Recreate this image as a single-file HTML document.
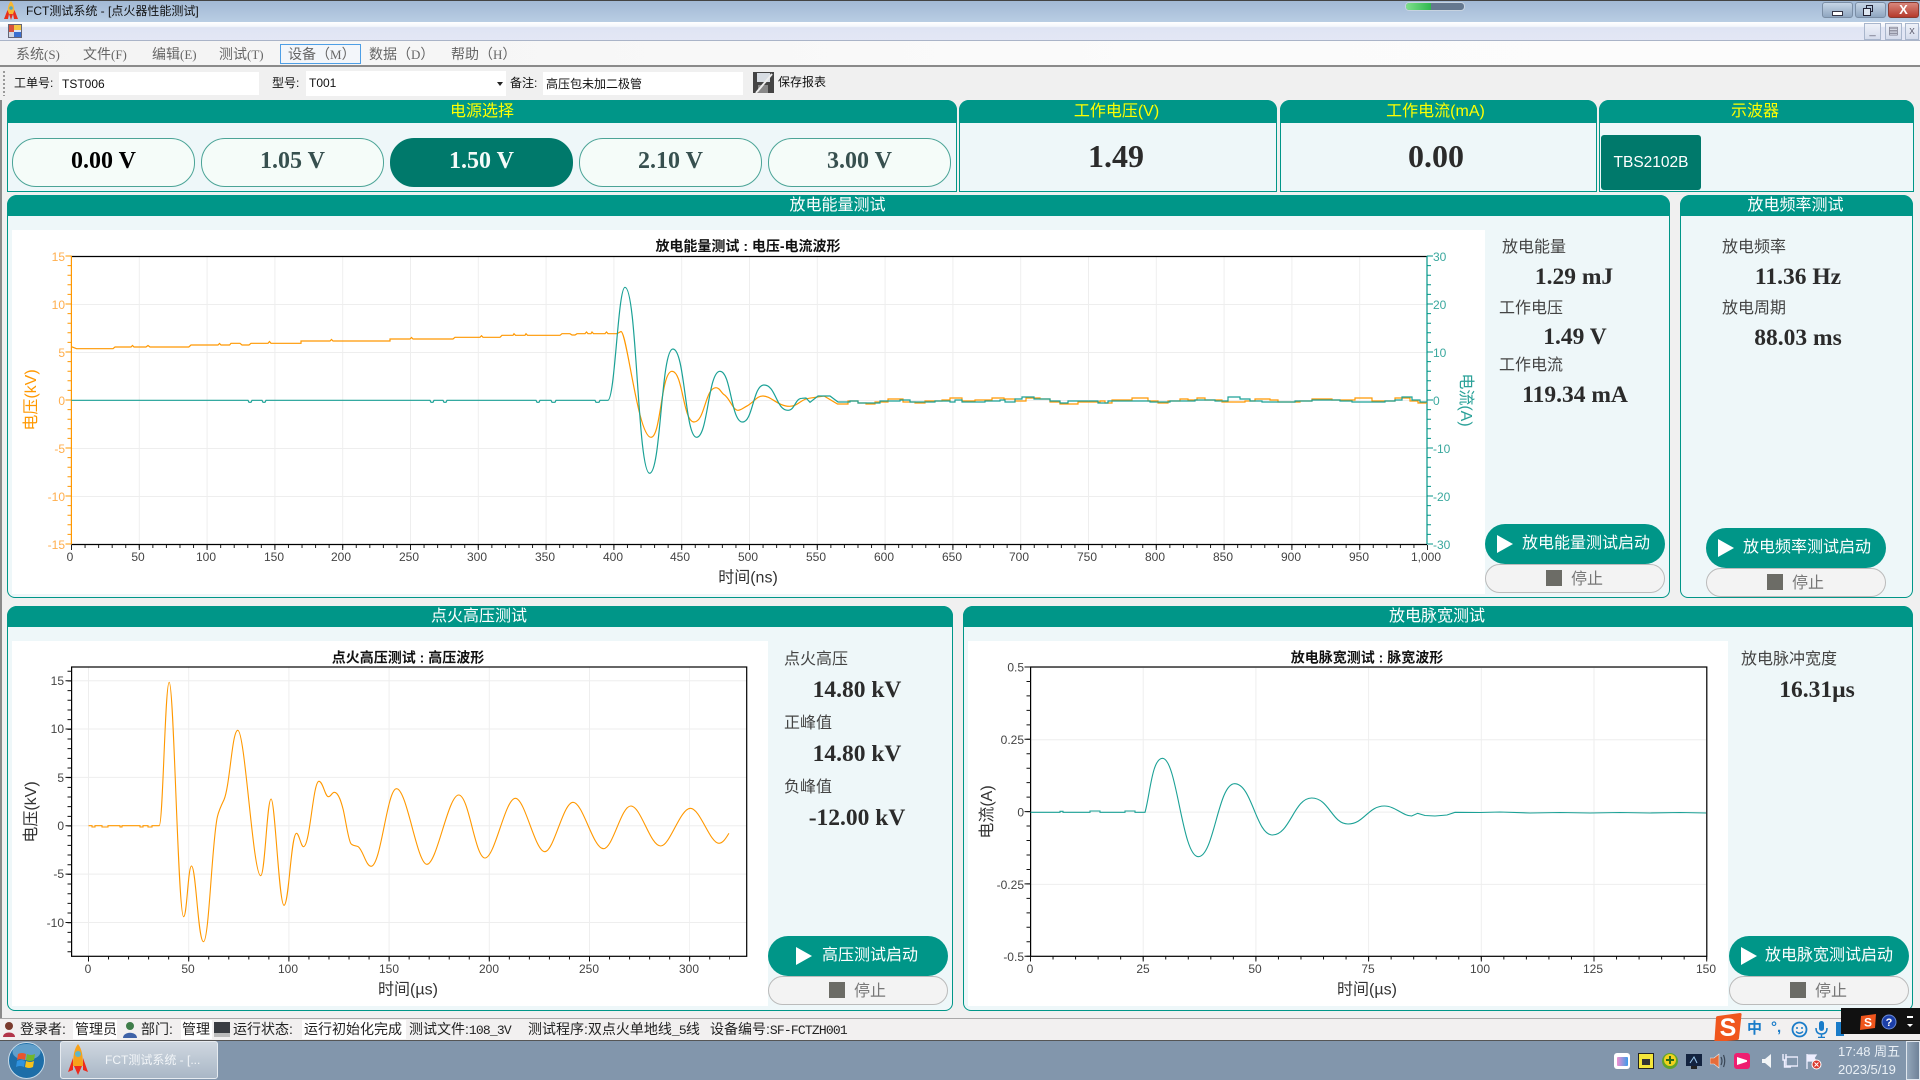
<!DOCTYPE html>
<html lang="zh"><head><meta charset="utf-8"><title>FCT测试系统</title>
<style>
html,body{margin:0;padding:0;width:1920px;height:1080px;overflow:hidden;background:#f0f0f0}
body{position:relative;font-family:"Liberation Sans","Noto Sans CJK SC",sans-serif;color:#222}
div,span,svg{position:absolute;box-sizing:border-box}
.t{white-space:nowrap;line-height:1}
.m{font-size:14px;color:#666;top:47px;white-space:nowrap;line-height:14px}
.m i{font-family:"Liberation Serif",serif;font-size:13px}
.tb{font-size:12px;top:77px;color:#111;white-space:nowrap;line-height:12px}
.st{font-size:14px;top:1022px;color:#222;white-space:nowrap;line-height:14px}
.st i{font-size:13px;letter-spacing:-.8px}
i{font-style:normal;font-family:"Liberation Mono",monospace;font-size:12px}
.w{background:#fff}
.p{background:#eef7f9;border:1px solid #009688;border-radius:10px 10px 8px 8px}
.h{background:#009688;border-radius:10px 10px 0 0;left:-1px;right:-1px;top:-1px;color:#fff;font-size:16px;text-align:center;white-space:nowrap}
.y{color:#ff0}
.pb{top:138px;width:183px;height:49px;border:1px solid #4ba497;border-radius:24px;background:#f5fcf9;font:bold 24px/45px "Liberation Serif",serif;text-align:center;color:#37504f}
.l{font-size:16px;color:#444;white-space:nowrap;line-height:16px}
.v{font:bold 23.5px/24px "Liberation Serif",serif;color:#2b2b2b;white-space:nowrap;text-align:center;width:180px}
.go{background:#009688;border-radius:20px;height:40px;width:180px;color:#fff;font-size:16px;line-height:40px;white-space:nowrap}
.tri{width:0;height:0;border-left:16px solid #fff;border-top:9px solid transparent;border-bottom:9px solid transparent;top:11px}
.stop{background:#f3f3f3;border:1px solid #bbb;border-radius:15px;height:29px;width:180px;color:#777;font-size:16px;line-height:29px;white-space:nowrap}
.sq{width:16px;height:16px;background:#6c6c66;top:5px}
.wb{border:1px solid #7b8ea5;border-radius:3px;top:2px;height:16px;width:31px;background:linear-gradient(#c6d5e6,#8fa6c0)}
.mb{border:1px solid #a9b6cc;top:23px;height:17px;background:linear-gradient(#eef1f8,#d5dcec);color:#667;font:11px/15px "Liberation Sans",sans-serif;text-align:center}
svg text{font-family:"Liberation Sans","Noto Sans CJK SC",sans-serif}
</style></head><body>

<!-- title bar -->
<div style="left:0;top:0;width:1920px;height:22px;background:linear-gradient(#a2b9d5,#b9cde3);border-top:1px solid #444"></div>
<svg style="left:4px;top:1px" width="14" height="20" viewBox="0 0 14 20"><path d="M7 0C10 3 10.500 8 10.500 13H3.500C3.500 8 4 3 7 0Z" fill="#f7b733"/><path d="M3.500 9L0 18H4L5 13ZM10.500 9L14 18H10L9 13Z" fill="#e8301c"/><circle cx="7" cy="7" r="1.800" fill="#5ab"/><path d="M5 13H9L7 19Z" fill="#e8301c"/></svg>
<div class="t" style="left:26px;top:5px;font-size:12px;color:#111">FCT测试系统 - [点火器性能测试]</div>
<div style="left:1405px;top:2px;width:60px;height:9px;border-radius:4px;background:#65788f;border:1px solid #c7d3e0"></div>
<div style="left:1406px;top:3px;width:25px;height:7px;border-radius:3px 0 0 3px;background:linear-gradient(90deg,#7fe08c,#2fb84f)"></div>
<div class="wb" style="left:1822px"><span style="left:9px;top:8px;width:11px;height:5px;background:#fff;border:1px solid #334"></span></div>
<div class="wb" style="left:1855px"><span style="left:10px;top:2px;width:7px;height:7px;border:1px solid #223"></span><span style="left:7px;top:5px;width:8px;height:8px;border:1px solid #223;background:#dde6f0"></span></div>
<div class="wb" style="left:1888px;background:linear-gradient(#d8877c,#b53a2c);border-color:#8a3a30;color:#fff;font:bold 13px/14px 'Liberation Sans',sans-serif;text-align:center">X</div>

<!-- MDI bar -->
<div style="left:0;top:22px;width:1920px;height:19px;background:linear-gradient(#fff 0,#f4f6fb 25%,#dfe4f3 30%,#e3e7f5 100%);border-bottom:1px solid #aab4c8"></div>
<svg style="left:8px;top:24px" width="14" height="14" viewBox="0 0 14 14"><rect x="0" y="0" width="6" height="8" fill="#d9503a"/><rect x="6" y="0" width="8" height="6" fill="#f4c542"/><rect x="6" y="8" width="8" height="6" fill="#3a6fd0"/><rect x="0" y="8" width="6" height="6" fill="#cfd6e4"/><rect x=".5" y=".5" width="13" height="13" fill="none" stroke="#667"/></svg>
<div class="mb" style="left:1864px;width:17px">_</div>
<div class="mb" style="left:1885px;width:17px">&#9636;</div>
<div class="mb" style="left:1905px;width:14px">x</div>

<!-- menu bar -->
<div style="left:0;top:41px;width:1920px;height:26px;background:linear-gradient(90deg,#f3f3f3,#fbfbfb 60%,#fcfcfc);border-bottom:2px solid #8a8a8a"></div>
<div class="m" style="left:16px">系统<i>(S)</i></div>
<div class="m" style="left:83px">文件<i>(F)</i></div>
<div class="m" style="left:152px">编辑<i>(E)</i></div>
<div class="m" style="left:219px">测试<i>(T)</i></div>
<div style="left:280px;top:44px;width:81px;height:20px;border:1px solid #4e9fe6;background:#f3f6fa"></div>
<div class="m" style="left:288px">设备（<i>M</i>）</div>
<div class="m" style="left:369px">数据（<i>D</i>）</div>
<div class="m" style="left:451px">帮助（<i>H</i>）</div>

<!-- toolbar -->
<div style="left:3px;top:71px;width:2px;height:25px;background:repeating-linear-gradient(#999 0 2px,transparent 2px 4px)"></div>
<div class="tb" style="left:14px">工单号:</div>
<div class="w" style="left:59px;top:72px;width:200px;height:23px"></div>
<div class="tb" style="left:62px;top:78px">TST006</div>
<div class="tb" style="left:272px">型号:</div>
<div class="w" style="left:306px;top:71px;width:200px;height:25px"></div>
<div class="tb" style="left:309px;top:77px">T001</div>
<div style="left:497px;top:82px;width:0;height:0;border-left:3px solid transparent;border-right:3px solid transparent;border-top:4px solid #222"></div>
<div class="tb" style="left:510px">备注:</div>
<div class="w" style="left:543px;top:72px;width:200px;height:23px"></div>
<div class="tb" style="left:546px;top:78px">高压包未加二极管</div>
<svg style="left:752px;top:71px" width="23" height="23" viewBox="0 0 23 23"><rect x="1" y="1" width="21" height="21" fill="#444"/><rect x="5" y="2" width="13" height="9" fill="#d8dde3"/><rect x="6" y="14" width="10" height="8" fill="#888"/><path d="M4 22L20 3" stroke="#eee" stroke-width="2"/></svg>
<div class="tb" style="left:778px;top:76px">保存报表</div>

<!-- top row panels -->
<div class="p" style="left:7px;top:100px;width:950px;height:92px;border-radius:10px 10px 0 0"><div class="h y" style="height:23px;line-height:23px">电源选择</div></div>
<div class="p" style="left:959px;top:100px;width:318px;height:92px;border-radius:10px 10px 0 0"><div class="h y" style="height:23px;line-height:23px;padding-right:3px">工作电压(V)</div></div>
<div class="p" style="left:1280px;top:100px;width:317px;height:92px;border-radius:10px 10px 0 0"><div class="h y" style="height:23px;line-height:23px;padding-right:6px">工作电流(mA)</div></div>
<div class="p" style="left:1599px;top:100px;width:315px;height:92px;border-radius:10px 10px 0 0"><div class="h y" style="height:23px;line-height:23px;padding-right:3px">示波器</div></div>

<div class="pb" style="left:12px;color:#000">0.00 V</div>
<div class="pb" style="left:201px">1.05 V</div>
<div class="pb" style="left:390px;background:#00796b;color:#f4fbf9;border-color:#00796b">1.50 V</div>
<div class="pb" style="left:579px">2.10 V</div>
<div class="pb" style="left:768px">3.00 V</div>

<div class="t" style="left:958px;width:316px;top:140px;text-align:center;font:bold 32px/32px 'Liberation Serif',serif;color:#2b2b2b">1.49</div>
<div class="t" style="left:1280px;width:312px;top:140px;text-align:center;font:bold 32px/32px 'Liberation Serif',serif;color:#2b2b2b">0.00</div>
<div style="left:1601px;top:135px;width:100px;height:55px;background:#00796b;border-radius:3px;color:#fff;font:15.500px/56px 'Liberation Sans',sans-serif;text-align:center">TBS2102B</div>

<!-- middle row -->
<div class="p" style="left:7px;top:195px;width:1663px;height:403px"><div class="h" style="height:21px;line-height:21px;padding-right:2px">放电能量测试</div></div>
<div class="p" style="left:1680px;top:195px;width:233px;height:403px"><div class="h" style="height:21px;line-height:21px;padding-right:2px">放电频率测试</div></div>
<div class="w" style="left:12px;top:230px;width:1473px;height:364px"></div>

<div class="l" style="left:1502px;top:240px">放电能量</div>
<div class="v" style="left:1484px;top:265px">1.29 mJ</div>
<div class="l" style="left:1499px;top:301px">工作电压</div>
<div class="v" style="left:1485px;top:325px">1.49 V</div>
<div class="l" style="left:1499px;top:358px">工作电流</div>
<div class="v" style="left:1485px;top:383px">119.34 mA</div>
<div class="go" style="left:1485px;top:524px"><div class="tri" style="left:12px"></div><span style="left:37px">放电能量测试启动</span></div>
<div class="stop" style="left:1485px;top:564px"><div class="sq" style="left:60px"></div><span style="left:85px">停止</span></div>

<div class="l" style="left:1722px;top:240px">放电频率</div>
<div class="v" style="left:1708px;top:265px">11.36 Hz</div>
<div class="l" style="left:1722px;top:301px">放电周期</div>
<div class="v" style="left:1708px;top:326px">88.03 ms</div>
<div class="go" style="left:1706px;top:528px"><div class="tri" style="left:12px"></div><span style="left:37px">放电频率测试启动</span></div>
<div class="stop" style="left:1706px;top:568px"><div class="sq" style="left:60px"></div><span style="left:85px">停止</span></div>

<!-- bottom row -->
<div class="p" style="left:7px;top:606px;width:946px;height:405px"><div class="h" style="height:21px;line-height:21px;padding-right:2px">点火高压测试</div></div>
<div class="p" style="left:963px;top:606px;width:950px;height:405px"><div class="h" style="height:21px;line-height:21px;padding-right:2px">放电脉宽测试</div></div>
<div class="w" style="left:12px;top:641px;width:756px;height:365px"></div>
<div class="w" style="left:968px;top:641px;width:760px;height:365px"></div>

<div class="l" style="left:784px;top:652px">点火高压</div>
<div class="v" style="left:767px;top:678px">14.80 kV</div>
<div class="l" style="left:784px;top:716px">正峰值</div>
<div class="v" style="left:767px;top:742px">14.80 kV</div>
<div class="l" style="left:784px;top:780px">负峰值</div>
<div class="v" style="left:767px;top:806px">-12.00 kV</div>
<div class="go" style="left:768px;top:936px"><div class="tri" style="left:28px"></div><span style="left:54px">高压测试启动</span></div>
<div class="stop" style="left:768px;top:976px"><div class="sq" style="left:60px"></div><span style="left:85px">停止</span></div>

<div class="l" style="left:1741px;top:652px">放电脉冲宽度</div>
<div class="v" style="left:1727px;top:678px">16.31µs</div>
<div class="go" style="left:1729px;top:936px"><div class="tri" style="left:12px"></div><span style="left:36px">放电脉宽测试启动</span></div>
<div class="stop" style="left:1729px;top:976px"><div class="sq" style="left:60px"></div><span style="left:85px">停止</span></div>

<!-- charts -->
<svg style="left:0;top:0" width="1920" height="1080" viewBox="0 0 1920 1080" fill="none">
<!-- chart 1 grid -->
<path d="M71 400H1427" stroke="#eee" stroke-width="288" stroke-dasharray="1 66.800"/>
<path d="M749 256V544" stroke="#eee" stroke-width="1356" stroke-dasharray="1 47"/>
<path d="M71.400 256.500H1427M71.400 544.500H1427" stroke="#000" stroke-width="1.200"/>
<path d="M71.400 256V544" stroke="#ff9800" stroke-width="1.200"/>
<path d="M69.500 255.500V545" stroke="#ff9800" stroke-width="4" stroke-dasharray="1 8.600"/>
<path d="M68.500 255.500V545" stroke="#ff9800" stroke-width="6" stroke-dasharray="1 47"/>
<path d="M1427 256V544" stroke="#009688" stroke-width="1.200"/>
<path d="M1429 255.500V545" stroke="#009688" stroke-width="4" stroke-dasharray="1 8.600"/>
<path d="M1430 255.500V545" stroke="#009688" stroke-width="6" stroke-dasharray="1 47"/>
<path d="M71 546.500H1428" stroke="#222" stroke-width="3" stroke-dasharray="1 12.560"/>
<path d="M71 547.500H1428" stroke="#222" stroke-width="5" stroke-dasharray="1 66.800"/>
<!-- chart 1 curves -->
<path stroke="#ff9800" stroke-width="1.200" d="M71.400 346.700L76.500 348.700H113L115 347H131L132.500 345.500L134 347H146L148 345.500L150 347H188.800L191 345H218L219.500 343.500L221 345H229.600L231 343.300H240L242 345H249L251 343.300H268L269.500 341.500L271 343.300H301V341H330L331.500 339.500L333 341H390V339H410L411.500 337.500L413 339H453L455 337.300H480L481.500 335.700L483 337.300H500L502 335.300H513L514 333.700L515.500 335.300H525L526 333.700L527.500 335.300H560L562 333.700H570L572 335H575L577 333.700H585L586.500 332L588 333.700H591L592 332L593.500 333.700H605L606.500 332L608 333.700H617L621 331.500C627 332 638 437.300 651 437.300C661 437.300 661 371.300 672 371.300C683 371.300 683 422 694 422C705 422 705 387.700 716 387.700C720 387.700 721 393 724.600 395C730 399 733 410.300 738 410.300C741 410.300 743 408 747.500 405.700C755 401 757 396 763 396C771 396 778 406.300 789.600 406.300C798 406.300 801 399 808.800 398.300L824 396L837.500 404H848V401H858V403H866V404H875V402H888V399H903V402H915V403H925V401H942V400H950V398H962V401H975V400H992V398H1004V399H1015V401H1026V398H1040V399H1050V402H1060V404H1078V402H1100V401H1105V403H1112V400H1132V398H1148V401H1158V403H1168V401H1180V399H1188V400H1197V398H1205V400H1222V402H1245V401H1255V399H1270V400H1278V402H1300V401H1312V399H1332V400H1355V398H1372V401H1395V398H1410V401H1418V403H1427"/>
<path stroke="#1ba196" stroke-width="1.200" d="M71.400 400.300H248L249 402.300H251L252 400.300H262L263 402.300H265L266 400.300H430L431 402.300H433L434 400.300H443L444 402.300H446L447 400.300H536L537 402.300H539L540 400.300H551L552 402.300H555L556 400.300H595L596 402.300H599L600 400.300H607.800C615 400.300 618 287.300 625 287.300C637 287.300 637.600 473.300 649.600 473.300C661 473.300 661 349 672.900 349C685 349 685 437.300 696.600 437.300C708 437.300 708 371.300 720 371.300C731 371.300 731 422 742.500 422C753 422 753 385 764 385C776 385 776 410.300 788 410.300C795 410.300 795 398.300 802 398.300L806 398L810 402.300L818 396L830 396L838 402H850V401H858V403H880V401H900V400H910V402H935V401H950V402H955V400H962V402H985V401H1000V400H1005V402H1015V399H1022V397H1034V399H1050V401H1060V403H1068V401H1098V403H1108V401H1150V402H1170V401H1195V400H1215V401H1228V397H1240V399H1250V401H1262V402H1295V401H1312V400H1340V401H1352V402H1385V401H1395V400H1402V397H1412V400H1420V402H1427"/>
<!-- chart 1 labels -->
<g font-size="12" fill="#ffae4d" text-anchor="end">
<text x="65" y="261">15</text><text x="65" y="309">10</text><text x="65" y="357">5</text><text x="65" y="405">0</text><text x="65" y="453">-5</text><text x="65" y="501">-10</text><text x="65" y="549">-15</text></g>
<g font-size="12" fill="#3aa89e">
<text x="1433" y="261">30</text><text x="1433" y="309">20</text><text x="1433" y="357">10</text><text x="1433" y="405">0</text><text x="1433" y="453">-10</text><text x="1433" y="501">-20</text><text x="1433" y="549">-30</text></g>
<g font-size="12" fill="#444" text-anchor="middle" transform="translate(-1 0)">
<text x="71" y="561">0</text><text x="139" y="561">50</text><text x="207" y="561">100</text><text x="275" y="561">150</text><text x="342" y="561">200</text><text x="410" y="561">250</text><text x="478" y="561">300</text><text x="546" y="561">350</text><text x="614" y="561">400</text><text x="681" y="561">450</text><text x="749" y="561">500</text><text x="817" y="561">550</text><text x="885" y="561">600</text><text x="953" y="561">650</text><text x="1020" y="561">700</text><text x="1088" y="561">750</text><text x="1156" y="561">800</text><text x="1224" y="561">850</text><text x="1292" y="561">900</text><text x="1360" y="561">950</text><text x="1427" y="561">1,000</text></g>
<text x="748" y="251" font-size="14" font-weight="bold" fill="#111" text-anchor="middle">放电能量测试 : 电压-电流波形</text>
<text x="748" y="582.500" font-size="16" fill="#333" text-anchor="middle">时间(ns)</text>
<text transform="translate(36 400) rotate(-90)" font-size="16" fill="#ff9800" text-anchor="middle">电压(kV)</text>
<text transform="translate(1461 400) rotate(90)" font-size="16" fill="#2aa198" text-anchor="middle">电流(A)</text>

<!-- chart 2 -->
<path d="M88 811.600H690" stroke="#eee" stroke-width="289" stroke-dasharray="1 99.200"/>
<path d="M409 680.200V923" stroke="#eee" stroke-width="675" stroke-dasharray="1 47.350"/>
<rect x="71.600" y="667" width="675.100" height="289.300" stroke="#000" stroke-width="1.200"/>
<path d="M69.500 670.800V957" stroke="#111" stroke-width="4" stroke-dasharray="1 8.670"/>
<path d="M68.500 680.200V923" stroke="#111" stroke-width="6" stroke-dasharray="1 47.350"/>
<path d="M88 958H730" stroke="#111" stroke-width="3" stroke-dasharray="1 19.040"/>
<path d="M88 959H690" stroke="#111" stroke-width="5" stroke-dasharray="1 99.200"/>
<path stroke="#ff9800" stroke-width="1.100" d="M88.500 825.700H92V827H95V825.700H102V827H108V825.700H120V827H122V825.700H140V827H143V825.700H148V827H152V825.700H159.200C163 825.700 165 682.300 169.200 682.300C174 682.300 178 916.700 183.600 916.700C187 916.700 188 866 191.500 866C196 866 198 941.700 203.500 941.700C209 941.700 212 840 217.400 816.700C219 810 221 806 223.900 800C230 786 232 730.300 237.800 730.300C245 730.300 253 875.700 260.700 875.700C265 875.700 267 799 271.100 799C275 799 279 905.300 284 905.300C289 905.300 291 833.300 296.500 833.300C299 833.300 301 846.700 303.500 846.700C310 846.700 313 781.300 318.900 781.300C323 781.300 325 796.700 328.400 796.700C331 796.700 332 792.300 334.300 792.300C339 792.300 342 805 343.300 810C346 822 348 838 350.700 843.300C352 846 356 845.500 358.200 846.700C363 850 366 866.300 371.100 866.300C381 866.300 387 788.700 396.500 788.700C407 788.700 417 864.300 426.900 864.300C437 864.300 448 795 458.700 795C469 795 475 858 485 858C495 858 505 798.300 515.400 798.300C525 798.300 535 851.700 544.800 851.700C554 851.700 563 802.300 573.100 802.300C583 802.300 593 848.700 603.500 848.700C613 848.700 621 806 630.800 806C641 806 650 846 660.700 846C670 846 680 808.300 690.500 808.300C700 808.300 710 843.300 718.900 843.300C723 843.300 726 838 728.900 833.300"/>
<g font-size="12" fill="#444" text-anchor="end">
<text x="64" y="685">15</text><text x="64" y="733">10</text><text x="64" y="782">5</text><text x="64" y="830">0</text><text x="64" y="878">-5</text><text x="64" y="927">-10</text></g>
<g font-size="12" fill="#444" text-anchor="middle">
<text x="88" y="973">0</text><text x="188" y="973">50</text><text x="288" y="973">100</text><text x="389" y="973">150</text><text x="489" y="973">200</text><text x="589" y="973">250</text><text x="689" y="973">300</text></g>
<text x="408" y="662.500" font-size="14" font-weight="bold" fill="#111" text-anchor="middle">点火高压测试 : 高压波形</text>
<text x="408" y="994.500" font-size="16" fill="#333" text-anchor="middle">时间(µs)</text>
<text transform="translate(36 812) rotate(-90)" font-size="16" fill="#333" text-anchor="middle">电压(kV)</text>

<!-- chart 3 -->
<path d="M1030 811.600H1708" stroke="#eee" stroke-width="289" stroke-dasharray="1 111.700"/>
<path d="M1368 667V957" stroke="#eee" stroke-width="676" stroke-dasharray="1 71.300"/>
<rect x="1030.600" y="667" width="676.200" height="289.300" stroke="#000" stroke-width="1.200"/>
<path d="M1028.500 666.500V957" stroke="#111" stroke-width="4" stroke-dasharray="1 13.460"/>
<path d="M1027.500 666.500V957" stroke="#111" stroke-width="6" stroke-dasharray="1 71.300"/>
<path d="M1030 958H1708" stroke="#111" stroke-width="3" stroke-dasharray="1 21.540"/>
<path d="M1030 959H1708" stroke="#111" stroke-width="5" stroke-dasharray="1 111.700"/>
<path stroke="#1ba196" stroke-width="1.100" d="M1030.600 812.300H1060V811.300H1063V812.300H1090V811H1100V812.300H1125V811H1135V812.300H1145C1150 795 1152 758.300 1162.500 758.300C1177 758.300 1182 856.700 1198.300 856.700C1214 856.700 1218 783.700 1234.600 783.700C1252 783.700 1256 835 1272.400 835C1290 835 1294 798 1311.700 798C1329 798 1332 824 1348 824C1364 824 1368 806 1384.400 806C1395 806 1403 816 1411.700 816L1417.700 813.300L1425 815.500L1435 816L1447 815L1455 812.300L1480 812.500L1500 812L1530 813L1560 812.500L1590 813L1620 812.500L1650 813L1680 812.500L1706 813"/>
<g font-size="12" fill="#444" text-anchor="end">
<text x="1024" y="671.500">0.5</text><text x="1024" y="744">0.25</text><text x="1024" y="816.500">0</text><text x="1024" y="889">-0.25</text><text x="1024" y="961">-0.5</text></g>
<g font-size="12" fill="#444" text-anchor="middle">
<text x="1030" y="973">0</text><text x="1143" y="973">25</text><text x="1255" y="973">50</text><text x="1368" y="973">75</text><text x="1480" y="973">100</text><text x="1593" y="973">125</text><text x="1706" y="973">150</text></g>
<text x="1367" y="662.500" font-size="14" font-weight="bold" fill="#111" text-anchor="middle">放电脉宽测试 : 脉宽波形</text>
<text x="1367" y="994.500" font-size="16" fill="#333" text-anchor="middle">时间(µs)</text>
<text transform="translate(992 812) rotate(-90)" font-size="16" fill="#333" text-anchor="middle">电流(A)</text>
</svg>

<!-- left edge -->
<div style="left:0;top:100px;width:2px;height:918px;background:#8a8a8a"></div>

<!-- status bar -->
<div style="left:0;top:1018px;width:1920px;height:23px;background:#f2f0f0;border-top:1px solid #a8a8a8;border-bottom:1px solid #555"></div>
<div class="w" style="left:73px;top:1020px;width:44px;height:19px"></div>
<div class="w" style="left:181px;top:1020px;width:31px;height:19px"></div>
<div class="w" style="left:302px;top:1020px;width:104px;height:19px"></div>
<svg style="left:2px;top:1021px" width="14" height="17" viewBox="0 0 14 17"><circle cx="7" cy="5" r="4" fill="#7a3b2e"/><path d="M1 16C1 10 13 10 13 16Z" fill="#b2354a"/></svg>
<div class="st" style="left:20px">登录者:</div><div class="st" style="left:75px">管理员</div>
<svg style="left:122px;top:1021px" width="16" height="17" viewBox="0 0 16 17"><circle cx="8" cy="5" r="4" fill="#3f7d4a"/><path d="M1 17C1 10 15 10 15 17Z" fill="#3f63a8"/></svg>
<div class="st" style="left:141px">部门:</div><div class="st" style="left:182px">管理</div>
<svg style="left:214px;top:1022px" width="16" height="15" viewBox="0 0 16 15"><rect x="0" y="0" width="16" height="11" fill="#3a3d42"/><rect x="0" y="11" width="16" height="4" fill="#bbb"/></svg>
<div class="st" style="left:233px">运行状态:</div><div class="st" style="left:304px">运行初始化完成</div>
<div class="st" style="left:409px">测试文件:<i>108_3V</i></div>
<div class="st" style="left:528px">测试程序:双点火单地线<i>_5</i>线</div>
<div class="st" style="left:710px">设备编号:<i>SF-FCTZH001</i></div>

<svg style="left:1714px;top:1013px" width="28" height="29" viewBox="0 0 28 29"><path d="M4 3L26 0Q28 0 27.500 2L25 25Q25 27 23 27L2 29Q0 29 .5 27L2 5Q2 3 4 3Z" fill="#f0561d"/><text x="14" y="23" text-anchor="middle" font-family="Liberation Sans,sans-serif" font-size="25" font-weight="bold" fill="#fff">S</text></svg>
<div class="t" style="left:1747px;top:1021px;font-size:15px;font-weight:bold;color:#1a7cc9">中</div>
<div class="t" style="left:1771px;top:1020px;font-size:15px;font-weight:bold;color:#1a7cc9">°,</div>
<svg style="left:1791px;top:1021px" width="17" height="17" viewBox="0 0 17 17"><circle cx="8.500" cy="8.500" r="7" stroke="#1a7cc9" stroke-width="1.800" fill="none"/><circle cx="6" cy="7" r="1" fill="#1a7cc9"/><circle cx="11" cy="7" r="1" fill="#1a7cc9"/><path d="M5 10.500Q8.500 14 12 10.500" stroke="#1a7cc9" stroke-width="1.300" fill="none"/></svg>
<svg style="left:1815px;top:1021px" width="13" height="17" viewBox="0 0 13 17"><rect x="4" y="0" width="5" height="10" rx="2.500" fill="#1a7cc9"/><path d="M1 7Q1 13 6.500 13Q12 13 12 7M6.500 13V16M3 16.500H10" stroke="#1a7cc9" stroke-width="1.500" fill="none"/></svg>
<div style="left:1836px;top:1022px;width:8px;height:14px;background:#1a7cc9"></div>
<div style="left:1841px;top:1008px;width:79px;height:26px;background:#111"></div>
<svg style="left:1860px;top:1014px" width="56" height="16" viewBox="0 0 56 16"><path d="M1 2L16 0L15 14L0 16Z" fill="#f0561d"/><text x="8" y="12.500" text-anchor="middle" font-family="Liberation Sans,sans-serif" font-size="12" font-weight="bold" fill="#fff">S</text><circle cx="29" cy="8" r="7" fill="#1c3fa8" stroke="#6a8ad8"/><text x="29" y="12" text-anchor="middle" font-family="Liberation Sans,sans-serif" font-size="11" font-weight="bold" fill="#fff">?</text><rect x="47" y="2" width="6" height="2" fill="#fff"/><path d="M47 10H53L50 13Z" fill="#fff"/></svg>

<!-- taskbar -->
<div style="left:0;top:1041px;width:1920px;height:39px;background:#8296ac"></div>
<svg style="left:8px;top:1042px" width="37" height="37" viewBox="0 0 37 37"><circle cx="18.500" cy="18.500" r="18" fill="#1d6ea8" stroke="#c6dbea"/><ellipse cx="18.500" cy="10" rx="14" ry="8" fill="#7fb4d9" opacity=".7"/><path d="M10 12Q14 10 18 12L17 18Q13 16 9 18Z" fill="#e9552c"/><path d="M19 12Q23 14 27 12L26 18Q22 20 18 18Z" fill="#72b72c"/><path d="M9 19Q13 17 17 19L16 25Q12 23 8 25Z" fill="#2f93e0"/><path d="M18 19Q22 21 26 19L25 25Q21 27 17 25Z" fill="#f6c11c"/></svg>
<div style="left:60px;top:1041px;width:158px;height:38px;background:linear-gradient(#cfd7e0,#a9b7c6);border:1px solid #e6ebf0;border-radius:3px"></div>
<svg style="left:68px;top:1044px" width="20" height="32" viewBox="0 0 20 32"><path d="M10 0C14 5 15 12 15 22H5C5 12 6 5 10 0Z" fill="#f7a21b"/><path d="M5 14L0 28L5 26ZM15 14L20 28L15 26Z" fill="#ee2a1c"/><circle cx="10" cy="10" r="3" fill="#5fb6c9"/><path d="M6 22H14L10 31Z" fill="#ee2a1c"/></svg>
<div class="t" style="left:105px;top:1054px;font-size:12px;color:#f2f5f8">FCT测试系统 - [...</div>

<!-- tray -->
<div style="left:1614px;top:1053px;width:16px;height:16px;border-radius:3px;background:#fff"></div>
<div style="left:1617px;top:1057px;width:11px;height:9px;background:linear-gradient(90deg,#f08fd0,#3d9be9);border-radius:1px"></div>
<div style="left:1638px;top:1053px;width:16px;height:16px;background:#f5e63a;border:1px solid #222"></div>
<div style="left:1642px;top:1059px;width:8px;height:6px;background:#333"></div>
<svg style="left:1662px;top:1053px" width="16" height="16" viewBox="0 0 16 16"><circle cx="8" cy="8" r="8" fill="#5fa42e"/><circle cx="8" cy="7" r="6" fill="#f1d21e"/><path d="M4 7H12M8 3V11" stroke="#2c6a15" stroke-width="2"/></svg>
<svg style="left:1686px;top:1054px" width="16" height="15" viewBox="0 0 16 15"><rect x="0" y="0" width="16" height="12" fill="#13233f"/><path d="M4 9L8 3L11 9" stroke="#9cc8ee" fill="none"/><rect x="5" y="12" width="6" height="3" fill="#222"/></svg>
<svg style="left:1710px;top:1053px" width="16" height="16" viewBox="0 0 16 16"><path d="M0 5H4L9 1V15L4 11H0Z" fill="#e66c3a" stroke="#eee" stroke-width=".6"/><path d="M11 4Q13 8 11 12M13.500 2Q16 8 13.500 14" stroke="#3a4656" stroke-width="1.200" fill="none"/></svg>
<div style="left:1734px;top:1053px;width:16px;height:16px;border-radius:3px;background:#ee1e70"></div>
<div style="left:1737px;top:1057px;width:10px;height:8px;background:#fff;clip-path:polygon(0 0,100% 40%,100% 60%,0 100%)"></div>
<svg style="left:1762px;top:1054px" width="10" height="14" viewBox="0 0 10 14"><path d="M0 5H3L9 0V14L3 9H0Z" fill="#f2f4f6"/></svg>
<svg style="left:1782px;top:1053px" width="16" height="16" viewBox="0 0 16 16"><rect x="4" y="4" width="12" height="9" fill="none" stroke="#eef" stroke-width="1.400"/><path d="M1 1V7H4V1M2.500 7V14H9" stroke="#eef" stroke-width="1.400" fill="none"/></svg>
<svg style="left:1806px;top:1053px" width="16" height="17" viewBox="0 0 16 17"><path d="M1 1V16M1 2H10L8 5L10 8H1" stroke="#eef" stroke-width="1.300" fill="#eef"/><circle cx="10.500" cy="11.500" r="4.500" fill="#d9362b" stroke="#fff"/><path d="M8.500 9.500L12.500 13.500M12.500 9.500L8.500 13.500" stroke="#fff"/></svg>
<div class="t" style="left:1838px;top:1045px;font-size:13px;color:#eaf0f6">17:48 周五</div>
<div class="t" style="left:1838px;top:1063px;font-size:13px;color:#eaf0f6">2023/5/19</div>
<div style="left:1906px;top:1041px;width:14px;height:39px;border:1px solid #dfe6ee;background:linear-gradient(90deg,#93a6ba,#6f8298)"></div>
</body></html>
